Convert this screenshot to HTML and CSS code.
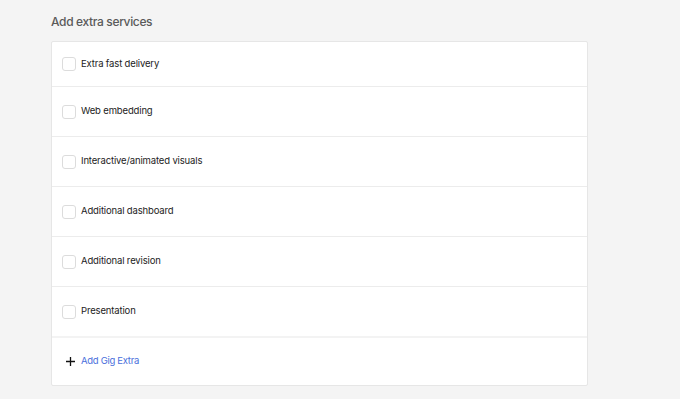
FILE: index.html
```html
<!DOCTYPE html>
<html>
<head>
<meta charset="utf-8">
<link rel="stylesheet" href="styles.css">
</head>
<body>
<div class="page">
  <h2 class="title">Add extra services</h2>
  <div class="card">
    <label class="row first"><span class="box"></span><span class="label">Extra fast delivery</span></label>
    <label class="row"><span class="box"></span><span class="label">Web embedding</span></label>
    <label class="row"><span class="box"></span><span class="label">Interactive/animated visuals</span></label>
    <label class="row"><span class="box"></span><span class="label">Additional dashboard</span></label>
    <label class="row"><span class="box"></span><span class="label">Additional revision</span></label>
    <label class="row"><span class="box"></span><span class="label">Presentation</span></label>
    <div class="row add">
      <svg class="plus" width="9" height="9" viewBox="0 0 9 9"><path d="M4.5 0v9M0 4.5h9" stroke="#111" stroke-width="1.3"/></svg>
      <span class="add-label">Add Gig Extra</span>
    </div>
  </div>
</div>
</body>
</html>
```

FILE: styles.css
```css
html, body {
  margin: 0;
  padding: 0;
  background: #f4f4f4;
  height: 100%;
}
body {
  font-family: Inter, "Liberation Sans", sans-serif;
  color: #222;
}
.page {
  padding: 13px 0 0 51px;
  width: 537px;
}
.title {
  margin: 0 0 11px 0;
  font-size: 12px;
  font-weight: 500;
  letter-spacing: -0.35px;
  color: #5a5a5a;
  line-height: 17px;
}
.card {
  background: #fff;
  border: 1px solid #e6e6e6;
  border-radius: 2px;
  display: flex;
  flex-direction: column;
}
.row {
  display: flex;
  align-items: center;
  height: 49px;
  padding-left: 10px;
  border-top: 1px solid #ececec;
  box-sizing: content-box;
}
.row.first {
  height: 44px;
  border-top: none;
}
.box {
  width: 12px;
  height: 12px;
  border: 1px solid #dcdcdc;
  border-radius: 3px;
  margin-right: 5px;
  flex: none;
}
.label {
  font-size: 9.5px;
  letter-spacing: -0.15px;
  color: #222;
  line-height: 12px;
  margin-top: -1px;
}
.row.add {
  height: 47px;
  border-top: 2px solid #f3f3f3;
  padding-left: 14px;
}
.plus {
  margin-right: 6px;
}
.add-label {
  font-size: 9.5px;
  letter-spacing: -0.3px;
  color: #4a6fdc;
  line-height: 12px;
  margin-top: -1px;
}
```
